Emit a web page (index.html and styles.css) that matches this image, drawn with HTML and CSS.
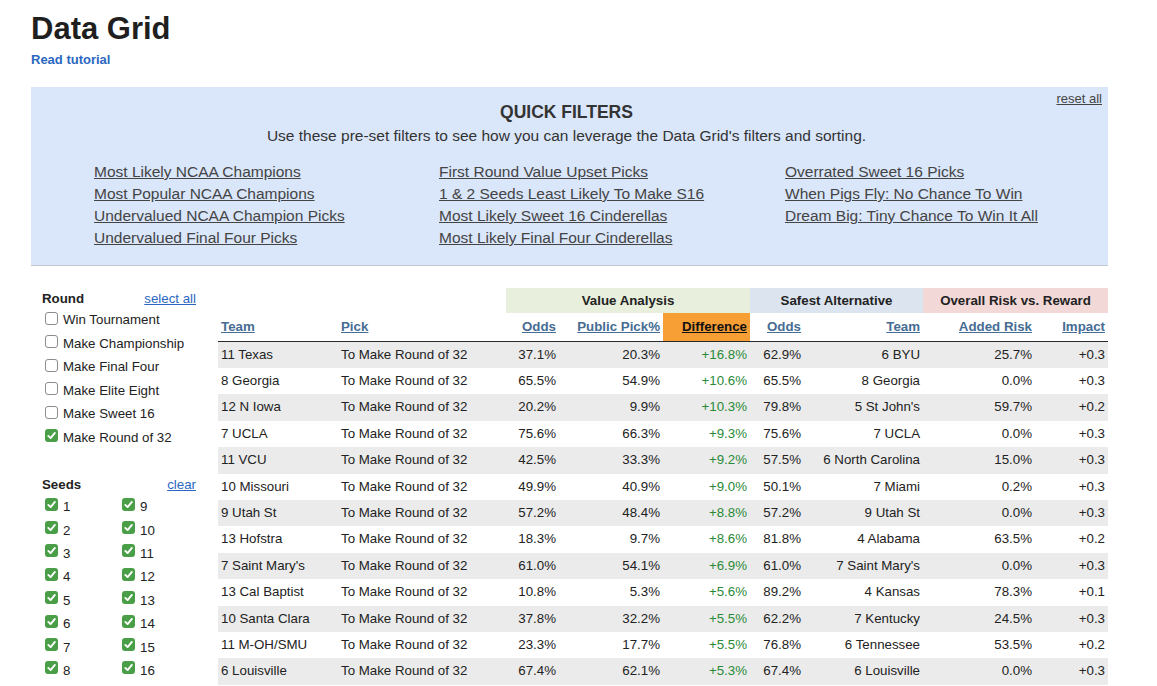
FILE: index.html
```html
<!DOCTYPE html>
<html>
<head>
<meta charset="utf-8">
<link rel="stylesheet" href="styles.css">
</head>
<body>
<div class="page">
  <h1 class="title">Data Grid</h1>
  <a class="tutorial" href="#">Read tutorial</a>

  <section class="qf">
    <div class="qf-head">
      <div></div>
      <div class="qf-titles">
        <div class="qf-title">QUICK FILTERS</div>
        <div class="qf-sub">Use these pre-set filters to see how you can leverage the Data Grid's filters and sorting.</div>
      </div>
      <div class="qf-reset"><a href="#">reset all</a></div>
    </div>
    <div class="qf-links">
      <div class="qf-col">
        <a href="#">Most Likely NCAA Champions</a>
        <a href="#">Most Popular NCAA Champions</a>
        <a href="#">Undervalued NCAA Champion Picks</a>
        <a href="#">Undervalued Final Four Picks</a>
      </div>
      <div class="qf-col">
        <a href="#">First Round Value Upset Picks</a>
        <a href="#">1 &amp; 2 Seeds Least Likely To Make S16</a>
        <a href="#">Most Likely Sweet 16 Cinderellas</a>
        <a href="#">Most Likely Final Four Cinderellas</a>
      </div>
      <div class="qf-col">
        <a href="#">Overrated Sweet 16 Picks</a>
        <a href="#">When Pigs Fly: No Chance To Win</a>
        <a href="#">Dream Big: Tiny Chance To Win It All</a>
      </div>
    </div>
  </section>

  <div class="main">
    <aside class="side">
      <div class="side-head"><span class="side-title">Round</span><a href="#">select all</a></div>
      <div class="opt"><span class="cb"></span>Win Tournament</div>
      <div class="opt"><span class="cb"></span>Make Championship</div>
      <div class="opt"><span class="cb"></span>Make Final Four</div>
      <div class="opt"><span class="cb"></span>Make Elite Eight</div>
      <div class="opt"><span class="cb"></span>Make Sweet 16</div>
      <div class="opt"><span class="cb on"><svg viewBox="0 0 13 13" width="13" height="13"><path d="M3.3 6.9 L5.6 9.1 L9.9 3.9" fill="none" stroke="#fff" stroke-width="1.9" stroke-linecap="round" stroke-linejoin="round"/></svg></span>Make Round of 32</div>

      <div class="side-head seeds-head"><span class="side-title">Seeds</span><a href="#">clear</a></div>
      <div class="seeds">
        <div class="opt seed"><span class="cb on"><svg viewBox="0 0 13 13" width="13" height="13"><path d="M3.3 6.9 L5.6 9.1 L9.9 3.9" fill="none" stroke="#fff" stroke-width="1.9" stroke-linecap="round" stroke-linejoin="round"/></svg></span>1</div>
        <div class="opt seed"><span class="cb on"><svg viewBox="0 0 13 13" width="13" height="13"><path d="M3.3 6.9 L5.6 9.1 L9.9 3.9" fill="none" stroke="#fff" stroke-width="1.9" stroke-linecap="round" stroke-linejoin="round"/></svg></span>9</div>
        <div class="opt seed"><span class="cb on"><svg viewBox="0 0 13 13" width="13" height="13"><path d="M3.3 6.9 L5.6 9.1 L9.9 3.9" fill="none" stroke="#fff" stroke-width="1.9" stroke-linecap="round" stroke-linejoin="round"/></svg></span>2</div>
        <div class="opt seed"><span class="cb on"><svg viewBox="0 0 13 13" width="13" height="13"><path d="M3.3 6.9 L5.6 9.1 L9.9 3.9" fill="none" stroke="#fff" stroke-width="1.9" stroke-linecap="round" stroke-linejoin="round"/></svg></span>10</div>
        <div class="opt seed"><span class="cb on"><svg viewBox="0 0 13 13" width="13" height="13"><path d="M3.3 6.9 L5.6 9.1 L9.9 3.9" fill="none" stroke="#fff" stroke-width="1.9" stroke-linecap="round" stroke-linejoin="round"/></svg></span>3</div>
        <div class="opt seed"><span class="cb on"><svg viewBox="0 0 13 13" width="13" height="13"><path d="M3.3 6.9 L5.6 9.1 L9.9 3.9" fill="none" stroke="#fff" stroke-width="1.9" stroke-linecap="round" stroke-linejoin="round"/></svg></span>11</div>
        <div class="opt seed"><span class="cb on"><svg viewBox="0 0 13 13" width="13" height="13"><path d="M3.3 6.9 L5.6 9.1 L9.9 3.9" fill="none" stroke="#fff" stroke-width="1.9" stroke-linecap="round" stroke-linejoin="round"/></svg></span>4</div>
        <div class="opt seed"><span class="cb on"><svg viewBox="0 0 13 13" width="13" height="13"><path d="M3.3 6.9 L5.6 9.1 L9.9 3.9" fill="none" stroke="#fff" stroke-width="1.9" stroke-linecap="round" stroke-linejoin="round"/></svg></span>12</div>
        <div class="opt seed"><span class="cb on"><svg viewBox="0 0 13 13" width="13" height="13"><path d="M3.3 6.9 L5.6 9.1 L9.9 3.9" fill="none" stroke="#fff" stroke-width="1.9" stroke-linecap="round" stroke-linejoin="round"/></svg></span>5</div>
        <div class="opt seed"><span class="cb on"><svg viewBox="0 0 13 13" width="13" height="13"><path d="M3.3 6.9 L5.6 9.1 L9.9 3.9" fill="none" stroke="#fff" stroke-width="1.9" stroke-linecap="round" stroke-linejoin="round"/></svg></span>13</div>
        <div class="opt seed"><span class="cb on"><svg viewBox="0 0 13 13" width="13" height="13"><path d="M3.3 6.9 L5.6 9.1 L9.9 3.9" fill="none" stroke="#fff" stroke-width="1.9" stroke-linecap="round" stroke-linejoin="round"/></svg></span>6</div>
        <div class="opt seed"><span class="cb on"><svg viewBox="0 0 13 13" width="13" height="13"><path d="M3.3 6.9 L5.6 9.1 L9.9 3.9" fill="none" stroke="#fff" stroke-width="1.9" stroke-linecap="round" stroke-linejoin="round"/></svg></span>14</div>
        <div class="opt seed"><span class="cb on"><svg viewBox="0 0 13 13" width="13" height="13"><path d="M3.3 6.9 L5.6 9.1 L9.9 3.9" fill="none" stroke="#fff" stroke-width="1.9" stroke-linecap="round" stroke-linejoin="round"/></svg></span>7</div>
        <div class="opt seed"><span class="cb on"><svg viewBox="0 0 13 13" width="13" height="13"><path d="M3.3 6.9 L5.6 9.1 L9.9 3.9" fill="none" stroke="#fff" stroke-width="1.9" stroke-linecap="round" stroke-linejoin="round"/></svg></span>15</div>
        <div class="opt seed"><span class="cb on"><svg viewBox="0 0 13 13" width="13" height="13"><path d="M3.3 6.9 L5.6 9.1 L9.9 3.9" fill="none" stroke="#fff" stroke-width="1.9" stroke-linecap="round" stroke-linejoin="round"/></svg></span>8</div>
        <div class="opt seed"><span class="cb on"><svg viewBox="0 0 13 13" width="13" height="13"><path d="M3.3 6.9 L5.6 9.1 L9.9 3.9" fill="none" stroke="#fff" stroke-width="1.9" stroke-linecap="round" stroke-linejoin="round"/></svg></span>16</div>
      </div>
    </aside>

    <table class="grid">
      <colgroup>
        <col class="c-team"><col class="c-pick"><col class="c-odds"><col class="c-pub"><col class="c-diff"><col class="c-aodds"><col class="c-ateam"><col class="c-risk"><col class="c-imp">
      </colgroup>
      <thead>
        <tr class="groups">
          <th colspan="2" class="g-empty"></th>
          <th colspan="3" class="g-value">Value Analysis</th>
          <th colspan="2" class="g-safe">Safest Alternative</th>
          <th colspan="2" class="g-risk">Overall Risk vs. Reward</th>
        </tr>
        <tr class="cols">
          <th class="l"><a href="#">Team</a></th>
          <th class="l"><a href="#">Pick</a></th>
          <th class="r"><a href="#">Odds</a></th>
          <th class="r"><a href="#">Public Pick%</a></th>
          <th class="r sorted"><a href="#">Difference</a></th>
          <th class="r"><a href="#">Odds</a></th>
          <th class="r"><a href="#">Team</a></th>
          <th class="r"><a href="#">Added Risk</a></th>
          <th class="r"><a href="#">Impact</a></th>
        </tr>
      </thead>
      <tbody>
        <tr><td>11 Texas</td><td>To Make Round of 32</td><td>37.1%</td><td>20.3%</td><td class="pos">+16.8%</td><td>62.9%</td><td>6 BYU</td><td>25.7%</td><td>+0.3</td></tr>
        <tr><td>8 Georgia</td><td>To Make Round of 32</td><td>65.5%</td><td>54.9%</td><td class="pos">+10.6%</td><td>65.5%</td><td>8 Georgia</td><td>0.0%</td><td>+0.3</td></tr>
        <tr><td>12 N Iowa</td><td>To Make Round of 32</td><td>20.2%</td><td>9.9%</td><td class="pos">+10.3%</td><td>79.8%</td><td>5 St John's</td><td>59.7%</td><td>+0.2</td></tr>
        <tr><td>7 UCLA</td><td>To Make Round of 32</td><td>75.6%</td><td>66.3%</td><td class="pos">+9.3%</td><td>75.6%</td><td>7 UCLA</td><td>0.0%</td><td>+0.3</td></tr>
        <tr><td>11 VCU</td><td>To Make Round of 32</td><td>42.5%</td><td>33.3%</td><td class="pos">+9.2%</td><td>57.5%</td><td>6 North Carolina</td><td>15.0%</td><td>+0.3</td></tr>
        <tr><td>10 Missouri</td><td>To Make Round of 32</td><td>49.9%</td><td>40.9%</td><td class="pos">+9.0%</td><td>50.1%</td><td>7 Miami</td><td>0.2%</td><td>+0.3</td></tr>
        <tr><td>9 Utah St</td><td>To Make Round of 32</td><td>57.2%</td><td>48.4%</td><td class="pos">+8.8%</td><td>57.2%</td><td>9 Utah St</td><td>0.0%</td><td>+0.3</td></tr>
        <tr><td>13 Hofstra</td><td>To Make Round of 32</td><td>18.3%</td><td>9.7%</td><td class="pos">+8.6%</td><td>81.8%</td><td>4 Alabama</td><td>63.5%</td><td>+0.2</td></tr>
        <tr><td>7 Saint Mary's</td><td>To Make Round of 32</td><td>61.0%</td><td>54.1%</td><td class="pos">+6.9%</td><td>61.0%</td><td>7 Saint Mary's</td><td>0.0%</td><td>+0.3</td></tr>
        <tr><td>13 Cal Baptist</td><td>To Make Round of 32</td><td>10.8%</td><td>5.3%</td><td class="pos">+5.6%</td><td>89.2%</td><td>4 Kansas</td><td>78.3%</td><td>+0.1</td></tr>
        <tr><td>10 Santa Clara</td><td>To Make Round of 32</td><td>37.8%</td><td>32.2%</td><td class="pos">+5.5%</td><td>62.2%</td><td>7 Kentucky</td><td>24.5%</td><td>+0.3</td></tr>
        <tr><td>11 M-OH/SMU</td><td>To Make Round of 32</td><td>23.3%</td><td>17.7%</td><td class="pos">+5.5%</td><td>76.8%</td><td>6 Tennessee</td><td>53.5%</td><td>+0.2</td></tr>
        <tr><td>6 Louisville</td><td>To Make Round of 32</td><td>67.4%</td><td>62.1%</td><td class="pos">+5.3%</td><td>67.4%</td><td>6 Louisville</td><td>0.0%</td><td>+0.3</td></tr>
      </tbody>
    </table>
  </div>
</div>
</body>
</html>
```

FILE: styles.css
```css
* { box-sizing: border-box; }

html, body {
  margin: 0;
  padding: 0;
  background: #fff;
}

body {
  font-family: "Liberation Sans", Arial, Helvetica, sans-serif;
  color: #222;
  font-size: 13.3px;
}

.page {
  padding: 11px 49px 0 31px;
}

.title {
  margin: 0;
  font-size: 31px;
  line-height: 35px;
  font-weight: bold;
  color: #1f1f1f;
}

.tutorial {
  display: block;
  margin-top: 6px;
  font-size: 13px;
  line-height: 16px;
  font-weight: bold;
  color: #2b67c0;
  text-decoration: none;
}

/* Quick filters */
.qf {
  margin-top: 19px;
  background: #dae6fa;
  border-bottom: 1px solid #c4c8cf;
  padding: 4px 6px 16px 0;
}

.qf-head {
  display: grid;
  grid-template-columns: 1fr auto 1fr;
}

.qf-titles {
  text-align: center;
  padding-top: 11px;
}

.qf-title {
  font-size: 17.5px;
  line-height: 21px;
  font-weight: bold;
  color: #333;
}

.qf-sub {
  margin-top: 4px;
  font-size: 15.5px;
  line-height: 18px;
  color: #333;
}

.qf-reset {
  justify-self: end;
  align-self: start;
  font-size: 13px;
  line-height: 16px;
}

.qf-reset a {
  color: #444;
  text-decoration: underline;
}

.qf-links {
  display: grid;
  grid-template-columns: 345px 346px 1fr;
  margin-top: 16px;
  padding-left: 63px;
}

.qf-col {
  display: flex;
  flex-direction: column;
}

.qf-col a {
  font-size: 15.5px;
  line-height: 22px;
  color: #444;
  text-decoration: underline;
  align-self: flex-start;
}

/* Main */
.main {
  display: flex;
  align-items: flex-start;
  margin-top: 22px;
}

.side {
  width: 187px;
  flex: none;
  padding: 0 22px 0 11px;
}

.side-head {
  display: flex;
  justify-content: space-between;
  align-items: center;
  height: 20px;
}

.side-title {
  font-weight: bold;
  color: #222;
}

.side-head a {
  color: #2b67c0;
  text-decoration: underline;
}

.opt {
  display: flex;
  align-items: center;
  height: 23.5px;
  color: #222;
}

.cb {
  width: 13px;
  height: 13px;
  flex: none;
  margin: -3px 5px 0 3px;
  border: 1px solid #8c8c8c;
  border-radius: 3px;
  background: #fff;
  display: flex;
}

.cb.on {
  border: none;
  background: #4a9e47;
}

.cb svg { display: block; }

.seeds-head {
  margin-top: 25px;
}

.seeds {
  display: grid;
  grid-template-columns: 77px 1fr;
  margin-top: 1px;
}

.seeds .opt { height: 23.4px; }

.seed .cb { margin-top: -5px; }

/* Grid table */
.grid {
  width: 890px;
  table-layout: fixed;
  border-collapse: collapse;
}

.c-team { width: 120px; }
.c-pick { width: 168px; }
.c-odds { width: 53px; }
.c-pub { width: 104px; }
.c-diff { width: 87px; }
.c-aodds { width: 54px; }
.c-ateam { width: 119px; }
.c-risk { width: 112px; }
.c-imp { width: 73px; }

.groups th {
  height: 25px;
  font-weight: bold;
  text-align: center;
  color: #222;
  padding: 0;
}

.g-value { background: #e8efdc; }
.g-safe { background: #dce5ef; }
.g-risk { background: #f2d9d8; }

.cols th {
  height: 28px;
  padding: 0 3px;
  font-weight: bold;
  border-bottom: 1px solid #2a2a2a;
  white-space: nowrap;
}

.cols th a {
  color: #466c93;
  text-decoration: underline;
}

.cols th.l { text-align: left; }
.cols th.r { text-align: right; }

.cols th.sorted { background: #f79f34; }
.cols th.sorted a { color: #111; }

.grid td {
  padding: 6px 3px;
  line-height: 14.4px;
  text-align: right;
  white-space: nowrap;
  color: #222;
}

.grid td:nth-child(1),
.grid td:nth-child(2) { text-align: left; }

.grid tbody tr:nth-child(odd) td { background: #ebebeb; }

.grid td.pos { color: #2a8a37; }
```
